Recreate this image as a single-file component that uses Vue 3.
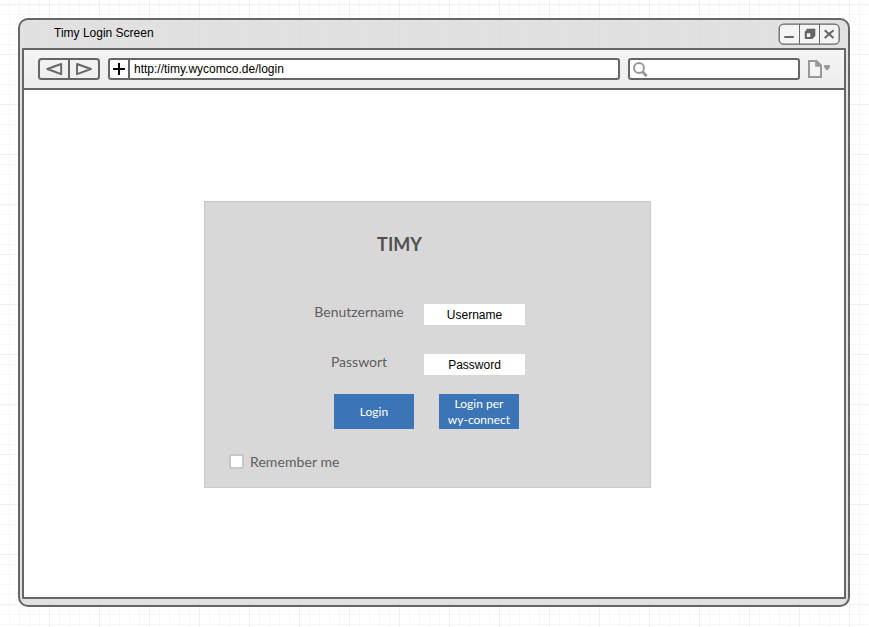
<script setup>
import { ref } from 'vue'

const title = 'Timy Login Screen'
const address = ref('http://timy.wycomco.de/login')
const fields = [
  { id: 'user', label: 'Benutzername', value: 'Username' },
  { id: 'pass', label: 'Passwort', value: 'Password' },
]
</script>

<template>
  <div class="canvas">
    <div class="window">
      <header class="titlebar">
        <span class="title">{{ title }}</span>
        <svg class="controls" width="62" height="22" viewBox="0 0 62 22">
          <rect x="1.2" y="1.2" width="60" height="20" rx="4.5" fill="#f4f4f4" stroke="#666" stroke-width="1.3" />
          <path d="M21.5 1V21M41.5 1V21" stroke="#666" stroke-width="1" />
          <path d="M6.3 14H15.8" stroke="#666" stroke-width="2" />
          <path d="M29 6H37V13L34 16V9H27.5Z" fill="#666" stroke="#666" stroke-width="0.6" stroke-linejoin="round" />
          <rect x="27.8" y="9.2" width="5.6" height="5.8" fill="#f4f4f4" stroke="#666" stroke-width="2.2" stroke-linejoin="round" />
          <path d="M46.7 7.2L55.5 15M55.5 7.2L46.7 15" stroke="#666" stroke-width="2" />
        </svg>
      </header>
      <section class="viewport">
        <nav class="toolbar">
          <svg class="history" width="62" height="22" viewBox="0 0 62 22">
            <rect x="1" y="1" width="60" height="20" rx="2.5" fill="none" stroke="#666" stroke-width="2" />
            <path d="M31 1V21" stroke="#666" stroke-width="2" />
            <path d="M9.3 11L23.2 6V16.2ZM52.9 11L39 6V16.2Z" fill="none" stroke="#666" stroke-width="1.9" stroke-linejoin="round" />
          </svg>
          <div class="address">
            <span class="plus">
              <svg width="12" height="12" viewBox="0 0 12 12"><path d="M6 0V12M0 6H12" stroke="#000" stroke-width="2" /></svg>
            </span>
            <span class="url">{{ address }}</span>
          </div>
          <div class="search">
            <svg width="16" height="17" viewBox="0 0 16 17">
              <circle cx="6" cy="6" r="5" fill="none" stroke="#999" stroke-width="2" />
              <path d="M9.4 9.6L13.6 14.2" stroke="#999" stroke-width="3" />
            </svg>
          </div>
          <svg class="page" width="23" height="18" viewBox="0 0 23 18">
            <path d="M1 1H8.5L13 5.5V17H1Z" fill="#f4f4f4" stroke="#999" stroke-width="2" />
            <path d="M7.5 1V6.5H13V5.5L8.5 1Z" fill="#999" stroke="#999" stroke-width="0.6" />
            <path d="M16.3 5H21.7L22 7L19.7 10.2H18.5L16 7Z" fill="#999" />
          </svg>
        </nav>
        <main class="content">
          <form class="panel" @submit.prevent>
            <h1>TIMY</h1>
            <div v-for="f in fields" :key="f.id" class="field">
              <span class="label">{{ f.label }}</span>
              <span class="input">{{ f.value }}</span>
            </div>
            <div class="actions">
              <button type="submit">Login</button>
              <button type="button">Login per<br />wy-connect</button>
            </div>
            <label class="remember"><span class="box"></span>Remember me</label>
          </form>
        </main>
      </section>
    </div>
  </div>
</template>

<style>
body {
  margin: 0;
  overflow: hidden;
}
</style>

<style scoped>
* {
  box-sizing: border-box;
}
.canvas {
  width: 869px;
  height: 627px;
  padding: 18px 19px 20px 18px;
  background-color: #fff;
  background-image:
    linear-gradient(90deg, #f0f0f0 1px, transparent 1px),
    linear-gradient(#f0f0f0 1px, transparent 1px),
    linear-gradient(90deg, #f7f7f7 1px, transparent 1px),
    linear-gradient(#f7f7f7 1px, transparent 1px);
  background-size: 50px 50px, 50px 50px, 10px 10px, 10px 10px;
  background-position: 49px 0, 0 4px, 9px 0, 0 4px;
  font-family: "Liberation Sans", Arial, sans-serif;
  font-size: 12px;
  color: #000;
}
.window {
  width: 832px;
  height: 589px;
  border: 2px solid #666;
  border-radius: 10px;
  background: rgba(218, 218, 218, 0.8);
  padding: 0 2px 6px;
  display: flex;
  flex-direction: column;
}
.titlebar {
  height: 28px;
  flex: none;
  display: flex;
  justify-content: space-between;
  padding: 3px 6px 0 32px;
}
.title {
  line-height: 20px;
}
.viewport {
  flex: 1;
  display: flex;
  flex-direction: column;
  border: 2px solid #666;
  border-radius: 1px;
  background: #fff;
}
.toolbar {
  height: 40px;
  flex: none;
  display: flex;
  align-items: flex-start;
  padding: 8px 0 0 14px;
  background: linear-gradient(#f4f4f4, #ededed);
  border-bottom: 2px solid #666;
}
.address {
  width: 512px;
  height: 22px;
  margin-left: 8px;
  display: flex;
  border: 2px solid #666;
  border-radius: 3px;
  background: #fff;
}
.plus {
  width: 20px;
  display: flex;
  align-items: center;
  padding-left: 3px;
  border-right: 2px solid #666;
}
.url {
  padding-left: 4px;
  line-height: 18px;
}
.search {
  width: 172px;
  height: 22px;
  margin-left: 8px;
  padding: 2px 0 0 3px;
  border: 2px solid #666;
  border-radius: 3px;
  background: #fff;
}
.search svg {
  display: block;
}
.page {
  margin: 2px 0 0 8px;
}
.content {
  flex: 1;
  padding: 111px 0 0 180px;
}
.panel {
  width: 447px;
  height: 287px;
  background: #d8d8d8;
  border: 1px solid #c8c8c8;
  font-family: Lato, sans-serif;
  color: #5e5e5e;
}
h1 {
  margin: 30px 0 0;
  padding-right: 56px;
  font-size: 18px;
  line-height: 24px;
  font-weight: 700;
  text-align: center;
  color: #505050;
}
.field {
  display: flex;
  height: 21px;
  padding-left: 89px;
}
h1 + .field {
  margin-top: 48px;
}
.field + .field {
  margin-top: 29px;
}
.label {
  width: 130px;
  text-align: center;
  font-size: 14px;
  line-height: 15px;
}
.input {
  width: 101px;
  background: #fff;
  text-align: center;
  font: 12px/22px "Liberation Sans", Arial, sans-serif;
  color: #000;
}
.actions {
  display: flex;
  gap: 25px;
  padding: 19px 0 0 129px;
}
button {
  width: 80px;
  height: 35px;
  padding: 0;
  border: 0;
  background: #3c75b5;
  color: #fff;
  font: 12px/16px Lato, sans-serif;
}
.remember {
  display: flex;
  align-items: flex-start;
  gap: 6px;
  margin: 24px 0 0 24px;
  font-size: 14px;
  line-height: 18px;
  letter-spacing: 0.08px;
}
.box {
  width: 15px;
  height: 15px;
  margin-top: 1px;
  border: 2px solid #c8c8c8;
  background: #fff;
}
</style>
